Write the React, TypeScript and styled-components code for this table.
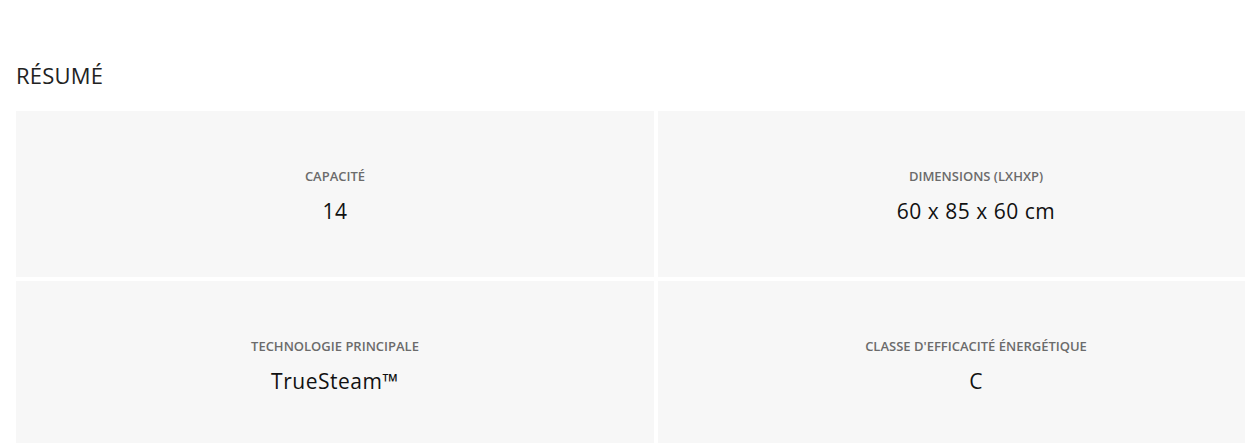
import styled, { createGlobalStyle } from 'styled-components';

const GlobalStyle = createGlobalStyle`
  html, body {
    margin: 0;
    padding: 0;
    background: #ffffff;
    overflow: hidden;
  }
  body {
    font-family: "Open Sans", "Liberation Sans", sans-serif;
    color: #111111;
  }
`;

const Section = styled.section`
  width: 1278px;
  padding: 61px 0 0 16px;
`;

const Title = styled.h2`
  margin: 0 0 22px;
  font-size: 22px;
  font-weight: 400;
  line-height: 28px;
  color: #222222;
  letter-spacing: 0.2px;
`;

const Grid = styled.div`
  display: grid;
  grid-template-columns: 638px 636px;
  gap: 4px;
`;

const Cell = styled.div`
  background: #f7f7f7;
  height: 166px;
  display: flex;
  flex-direction: column;
  align-items: center;
  justify-content: center;
  gap: 12px;
  padding-top: 4px;
  box-sizing: border-box;
`;

const Label = styled.span`
  font-size: 13px;
  font-weight: 600;
  text-transform: uppercase;
  color: #6b6b6b;
  line-height: 18px;
`;

const Value = styled.span`
  font-size: 21px;
  font-weight: 500;
  color: #111111;
  line-height: 28px;
  letter-spacing: 0.5px;
`;

const specs = [
  { label: 'Capacité', value: '14' },
  { label: 'Dimensions (LxHxP)', value: '60 x 85 x 60 cm' },
  { label: 'Technologie principale', value: 'TrueSteam™' },
  { label: "Classe d'efficacité énergétique", value: 'C' },
];

export default function App() {
  return (
    <>
      <GlobalStyle />
      <Section>
        <Title>RÉSUMÉ</Title>
        <Grid>
          {specs.map((s) => (
            <Cell key={s.label}>
              <Label>{s.label}</Label>
              <Value>{s.value}</Value>
            </Cell>
          ))}
        </Grid>
      </Section>
    </>
  );
}
